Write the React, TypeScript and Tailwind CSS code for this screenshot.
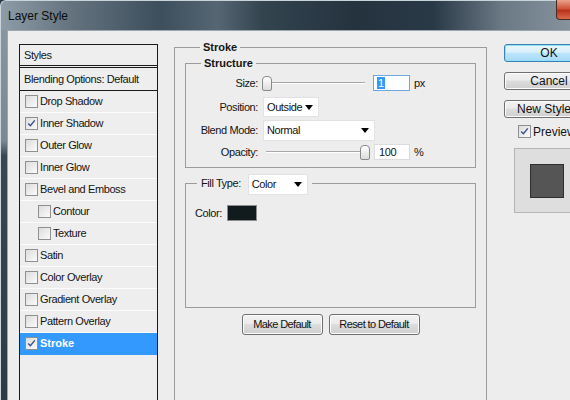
import React from 'react'

const font = { fontFamily: '"Liberation Sans", Arial, sans-serif' }

function Check({ checked = false }: { checked?: boolean }) {
  return (
    <span className="w-[13px] h-[13px] shrink-0 border border-[#8e8f8f] bg-[linear-gradient(135deg,#dcdcdc,#fbfbfb)] flex items-center justify-center">
      {checked && (
        <svg width="9" height="9" viewBox="0 0 9 9">
          <path d="M1.2 4.6 L3.4 6.8 L7.8 1.4" fill="none" stroke="#3a4f8f" strokeWidth="1.4" />
        </svg>
      )}
    </span>
  )
}

function Arrow() {
  return (
    <svg width="8" height="5" viewBox="0 0 8 5" className="shrink-0">
      <path d="M0 0 H8 L4 5 Z" fill="#000" />
    </svg>
  )
}

function Dropdown({ label, width, height }: { label: string; width: string; height: string }) {
  return (
    <div className={`${width} ${height} bg-white border border-[#e2e2e2] flex items-center justify-between pl-[3px] pr-[5px] text-[11px] text-[#111]`}>
      <span>{label}</span>
      <Arrow />
    </div>
  )
}

function Slider({ width, thumbLeft }: { width: string; thumbLeft: boolean }) {
  return (
    <div className={`${width} h-[15px] flex items-center ${thumbLeft ? '' : 'flex-row-reverse'}`}>
      <span className="w-[10px] h-[15px] shrink-0 rounded-t-[4px] rounded-b-[2px] border border-[#8a8a8a] bg-[linear-gradient(180deg,#ffffff,#dcdcdc)]" />
      <span className="flex-1 h-[2px] border-t border-[#a8a8a8] border-b border-b-white" />
    </div>
  )
}

function Btn({ label, width, primary = false, text = 'text-[11px]' }: { label: string; width: string; primary?: boolean; text?: string }) {
  return (
    <div
      className={`${width} ${text} shrink-0 flex items-center justify-center whitespace-nowrap rounded-[3px] border text-[#111] ${
        primary
          ? 'border-[#3c7fb1] bg-[linear-gradient(180deg,#eaf6fd_0%,#d9f0fc_45%,#bee6fd_50%,#a7d9f5_100%)] shadow-[inset_0_0_0_1px_#8ee0fb]'
          : 'border-[#707070] bg-[linear-gradient(180deg,#f2f2f2_0%,#ebebeb_45%,#dddddd_50%,#cfcfcf_100%)] shadow-[inset_0_0_0_1px_#fcfcfc]'
      }`}
    >
      {label}
    </div>
  )
}

const STYLES: { label: string; checked?: boolean; indent?: boolean; selected?: boolean }[] = [
  { label: 'Drop Shadow' },
  { label: 'Inner Shadow', checked: true },
  { label: 'Outer Glow' },
  { label: 'Inner Glow' },
  { label: 'Bevel and Emboss' },
  { label: 'Contour', indent: true },
  { label: 'Texture', indent: true },
  { label: 'Satin' },
  { label: 'Color Overlay' },
  { label: 'Gradient Overlay' },
  { label: 'Pattern Overlay' },
  { label: 'Stroke', checked: true, selected: true },
]

export default function App() {
  return (
    <div className="w-[570px] h-[400px] overflow-hidden flex flex-col bg-[#2c3a46]" style={font}>
      {/* title bar */}
      <div className="h-[30px] shrink-0 flex rounded-tl-[6px] border-t border-l border-[#c9d3da] bg-[linear-gradient(90deg,#8d9ca7_0%,#65747f_12%,#3d4e5c_28%,#566673_38%,#33444f_46%,#25333f_62%,#2a3946_76%,#6b7985_88%,#86939d_100%)]">
        <div className="flex-1 pl-[7px] pt-[6px] text-[12px] text-[#0c0c0c]">
          Layer Style
        </div>
        <div className="w-[14px] h-[20px] -mt-px rounded-bl-[4px] border-l border-b border-[#4a2a22] bg-[linear-gradient(180deg,#e9a28e_0%,#d0553a_45%,#b8321b_55%,#d86b4a_100%)]" />
      </div>

      <div className="flex-1 flex min-h-0">
        {/* left frame */}
        <div className="w-[7px] shrink-0 border-l border-[#c9d3da] bg-[linear-gradient(180deg,#8795a0_0%,#7a8893_30%,#3a4752_34%,#2e3b46_100%)]" />

        {/* client */}
        <div className="flex-1 flex bg-[#ededed] border-l border-t border-[#9aa6b0] pl-[11px] pt-[13px] text-[11px] tracking-[-0.4px] text-[#141414]">
          {/* styles list */}
          <div className="w-[139px] shrink-0 self-stretch -mb-[20px] border border-[#1b1b1b] bg-[#eeeeee] flex flex-col">
            <div className="h-[23px] pl-[4px] flex items-center border-b-[3px] border-double border-[#1b1b1b]">Styles</div>
            <div className="h-[23px] pl-[4px] flex items-center border-b border-[#1b1b1b]">Blending Options: Default</div>
            {STYLES.map(s => (
              <div
                key={s.label}
                className={`h-[22px] flex items-center gap-[2px] border-b ${
                  s.selected ? 'bg-[#3399ff] border-[#3399ff] text-white font-bold tracking-normal' : 'border-[#fbfbfb]'
                } ${s.indent ? 'pl-[18px]' : 'pl-[5px]'}`}
              >
                <Check checked={s.checked} />
                <span>{s.label}</span>
              </div>
            ))}
          </div>

          {/* Stroke group */}
          <div className="w-[313px] shrink-0 ml-[16px] mt-[3px] self-stretch -mb-[20px] border border-[#9c9c9c] px-[10px]">
            <div className="-mt-[7px] ml-[15px] px-[3px] w-fit h-[13px] leading-[13px] bg-[#ededed] font-bold tracking-normal">Stroke</div>

            {/* Structure */}
            <div className="mt-[9px] border border-[#9c9c9c] pb-[5px]">
              <div className="-mt-[7px] ml-[15px] px-[3px] w-fit h-[13px] leading-[13px] bg-[#ededed] font-bold tracking-normal">Structure</div>

              <div className="mt-[3px] h-[20px] flex items-center">
                <span className="w-[72px] text-right">Size:</span>
                <Slider width="w-[103px] ml-[4px]" thumbLeft />
                <div className="ml-[8px] w-[37px] h-[16px] bg-white border border-[#6fa7de] flex items-center pl-[3px]">
                  <span className="bg-[#3399ff] text-white leading-[12px] px-px">1</span>
                </div>
                <span className="ml-[4px]">px</span>
              </div>

              <div className="mt-[3px] h-[22px] flex items-center">
                <span className="w-[72px] text-right">Position:</span>
                <div className="ml-[5px]">
                  <Dropdown label="Outside" width="w-[56px]" height="h-[20px]" />
                </div>
              </div>

              <div className="mt-[1px] h-[22px] flex items-center">
                <span className="w-[72px] text-right">Blend Mode:</span>
                <div className="ml-[5px]">
                  <Dropdown label="Normal" width="w-[112px]" height="h-[21px]" />
                </div>
              </div>

              <div className="mt-[1px] h-[20px] flex items-center">
                <span className="w-[72px] text-right">Opacity:</span>
                <Slider width="w-[104px] ml-[8px]" thumbLeft={false} />
                <div className="ml-[4px] w-[36px] h-[16px] bg-white border border-[#dcdcdc] flex items-center pl-[4px]">100</div>
                <span className="ml-[4px]">%</span>
              </div>
            </div>

            {/* Fill type */}
            <div className="mt-[15px] h-[125px] border border-[#9c9c9c]">
              <div className="-mt-[10px] ml-[11px] px-[4px] w-fit h-[21px] flex items-center gap-[7px] bg-[#ededed]">
                <span className="-mt-[2px]">Fill Type:</span>
                <Dropdown label="Color" width="w-[60px]" height="h-[21px]" />
              </div>
              <div className="mt-[10px] h-[16px] pl-[9px] flex items-center gap-[5px]">
                <span>Color:</span>
                <span className="w-[30px] h-[16px] bg-[#111a1d] border border-[#8c8c8c]" />
              </div>
            </div>

            <div className="mt-[6px] flex justify-center gap-[6px] tracking-[-0.6px]">
              <div className="h-[21px] flex"><Btn label="Make Default" width="w-[81px]" /></div>
              <div className="h-[21px] flex"><Btn label="Reset to Default" width="w-[91px]" /></div>
            </div>
          </div>

          {/* right column */}
          <div className="ml-[17px] w-[90px] shrink-0 flex flex-col tracking-normal">
            <div className="h-[18px] flex"><Btn label="OK" width="w-[90px]" text="text-[12px]" primary /></div>
            <div className="mt-[10px] h-[18px] flex"><Btn label="Cancel" width="w-[90px]" text="text-[12px]" /></div>
            <div className="mt-[10px] h-[18px] flex"><Btn label="New Style..." width="w-[90px]" text="text-[12px]" /></div>
            <div className="mt-[7px] pl-[14px] h-[13px] flex items-center gap-[2px] text-[12px]">
              <Check checked />
              <span>Preview</span>
            </div>
            <div className="mt-[10px] ml-[10px] w-[80px] h-[65px] border border-[#b4b4b4] bg-[#dedede] flex items-center pl-[15px]">
              <span className="w-[34px] h-[34px] bg-[#555555] border border-[#2e2e2e]" />
            </div>
          </div>
        </div>
      </div>
    </div>
  )
}
